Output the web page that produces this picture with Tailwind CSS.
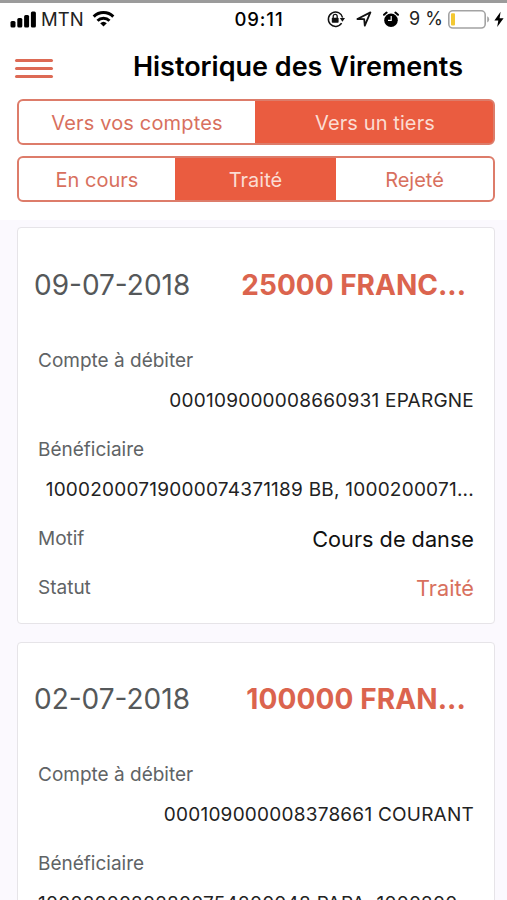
<!DOCTYPE html>
<html lang="fr">
<head>
  <meta charset="UTF-8" />
  <meta name="viewport" content="width=device-width, initial-scale=1.0" />
  <title>Historique des Virements</title>
  <script src="https://cdn.jsdelivr.net/npm/@tailwindcss/browser@4"></script>
</head>
<body class="bg-white font-['Inter','Liberation_Sans',sans-serif] h-[900px] overflow-hidden text-black">
  <div class="h-[900px] overflow-hidden flex flex-col border-t-[3px] border-[#9b9b9b]">

    <!-- Status bar -->
    <div class="h-8 shrink-0 grid grid-cols-[1fr_auto_1fr] items-center pl-[10px] pr-[3px]">
      <div class="flex items-center">
        <svg class="w-[27px] h-[17px] mr-[4px]" viewBox="0 0 27 17" fill="#000">
          <rect x="0.5" y="10" width="5" height="6.5" rx="1.5" />
          <rect x="7.3" y="7" width="5" height="9.5" rx="1.5" />
          <rect x="14.1" y="4" width="5" height="12.5" rx="1.5" />
          <rect x="20.9" y="0.5" width="5" height="16" rx="1.5" />
        </svg>
        <span class="text-[18.5px] leading-6 text-[#222]">MTN</span>
        <svg class="w-[23px] h-4 ml-[8px]" viewBox="0 0 22 16" fill="none" stroke="#000" stroke-width="3">
          <path d="M1.2 5.6a14 14 0 0 1 19.6 0" />
          <path d="M5 9.8a8.6 8.6 0 0 1 12 0" />
          <path d="M11 15.6l-3.3-3.4a4.8 4.8 0 0 1 6.6 0z" fill="#000" stroke="none" />
        </svg>
      </div>
      <span class="text-[18.5px] leading-6 font-medium tracking-[0.9px] pl-1">09:11</span>
      <div class="flex items-center justify-end">
        <svg class="w-[18px] h-[18px] mr-[11px]" viewBox="0 0 18 18" fill="none" stroke="#111" stroke-width="1.5">
          <path d="M14.6 13.2A7.2 7.2 0 1 1 15.6 7.6" />
          <path d="M12.8 8h5.2l-2.6 3.8z" fill="#111" stroke="none" />
          <rect x="4.8" y="7.8" width="6.8" height="5" rx="0.7" fill="#111" stroke="none" />
          <path d="M6.2 8V6.4a2 2 0 0 1 4 0V8" stroke-width="1.3" />
        </svg>
        <svg class="w-4 h-4 mr-[11px]" viewBox="0 0 16 16" fill="none" stroke="#111" stroke-width="1.8" stroke-linejoin="round">
          <path d="M1.4 8L14.4 1.4 8.8 14.6 8.2 8.2z" />
        </svg>
        <svg class="w-4 h-[17px] mr-[10px]" viewBox="0 0 16 17" fill="#000">
          <circle cx="8" cy="9.2" r="6.8" />
          <path d="M1 3.8L3.6 1.6M15 3.8L12.4 1.6" stroke="#000" stroke-width="2" stroke-linecap="round" />
          <path d="M8.2 5v4.4H5" fill="none" stroke="#fff" stroke-width="1.2" />
        </svg>
        <span class="text-[18px] leading-6 text-[#222] whitespace-nowrap mr-[5px]">9 %</span>
        <svg class="w-[42px] h-[19px] mr-[4px]" viewBox="0 0 42 19" fill="none">
          <rect x="0.8" y="0.8" width="36.4" height="17.2" rx="4" stroke="#a3a3a3" stroke-width="1.6" />
          <rect x="3" y="3.2" width="4" height="12.4" rx="1" fill="#f3c832" />
          <path d="M39.2 6.3q2 1 2 3.1t-2 3.1z" fill="#a3a3a3" />
        </svg>
        <svg class="w-[10px] h-[17px]" viewBox="0 0 10 17" fill="#000">
          <path d="M6.6 0.8L0.4 9.4h3.9L3.2 16 9.6 7.2H5.6z" />
        </svg>
      </div>
    </div>

    <!-- Header -->
    <header class="h-[64px] shrink-0 flex items-center pl-[15px] pr-11 justify-between">
      <button type="button" aria-label="Menu" class="flex flex-col gap-[5px] mt-[3px]">
        <span class="block w-[38px] h-[3px] rounded bg-[#dd6a55]"></span>
        <span class="block w-[38px] h-[3px] rounded bg-[#dd6a55]"></span>
        <span class="block w-[38px] h-[3px] rounded bg-[#dd6a55]"></span>
      </button>
      <h1 class="text-[27px] leading-8 font-semibold whitespace-nowrap">Historique des Virements</h1>
    </header>

    <!-- Filters -->
    <div class="shrink-0 h-[121px] pl-[17px] pr-[12px] flex flex-col gap-[11px] text-[20px] text-[#d8705e]">
      <div class="h-[46px] shrink-0 flex border-2 border-[#dd7c6a] rounded-[6px] overflow-hidden bg-[#ea5c40]">
        <button type="button" class="w-[236px] bg-white tracking-[0.15px] pt-[2px]">Vers vos comptes</button>
        <button type="button" class="flex-1 text-[#fbdcd3] tracking-[0.1px] pt-[2px] pl-[2px]">Vers un tiers</button>
      </div>
      <div class="h-[46px] shrink-0 flex border-2 border-[#dd7c6a] rounded-[6px] overflow-hidden">
        <button type="button" class="w-[156px] pt-[2px]">En cours</button>
        <button type="button" class="w-[161px] pt-[2px] bg-[#ea5c40] text-[#fbdcd3]">Traité</button>
        <button type="button" class="flex-1 pt-[2px]">Rejeté</button>
      </div>
    </div>

    <!-- Transfers -->
    <main class="flex-1 bg-[#fbf9fe] pt-[7px] pl-[17px] pr-[12px] flex flex-col gap-[18px]">
      <article class="h-[397px] shrink-0 bg-white border-[1.5px] border-[#e6e4e8] rounded-[4px] pl-[20px] pr-[20px] text-[19px] whitespace-nowrap">
        <div class="h-[113px] flex items-center justify-between -ml-1 pr-[8px]">
          <span class="text-[28px] text-[#55585a]">09-07-2018</span>
          <span class="text-[28px] font-bold text-[#db644e]">25000 FRANC...</span>
        </div>
        <div class="h-10 flex items-center text-[#606365]">Compte à débiter</div>
        <div class="h-10 flex items-center justify-end tracking-[0.23px] text-[#222]">000109000008660931 EPARGNE</div>
        <div class="h-10 mt-[9px] flex items-center text-[#606365]">Bénéficiaire</div>
        <div class="h-10 flex items-center justify-end tracking-[0.23px] text-[#222]">10002000719000074371189 BB, 1000200071...</div>
        <div class="h-[50px] mt-[4px] flex items-center justify-between">
          <span class="text-[#606365]">Motif</span>
          <span class="text-[21.7px] text-[#111]">Cours de danse</span>
        </div>
        <div class="h-[49px] flex items-center justify-between">
          <span class="text-[#606365]">Statut</span>
          <span class="text-[21.7px] text-[#d8705e]">Traité</span>
        </div>
      </article>

      <article class="h-[397px] shrink-0 bg-white border-[1.5px] border-[#e6e4e8] rounded-[4px] pl-[20px] pr-[20px] text-[19px] whitespace-nowrap">
        <div class="h-[112px] flex items-center justify-between -ml-1 pr-[8px]">
          <span class="text-[28px] text-[#55585a]">02-07-2018</span>
          <span class="text-[28px] font-bold tracking-[0.1px] text-[#db644e]">100000 FRAN...</span>
        </div>
        <div class="h-10 flex items-center text-[#606365]">Compte à débiter</div>
        <div class="h-10 flex items-center justify-end tracking-[0.23px] text-[#222]">000109000008378661 COURANT</div>
        <div class="h-10 mt-[9px] flex items-center text-[#606365]">Bénéficiaire</div>
        <div class="h-10 flex items-center justify-end tracking-[0.23px] text-[#222]">10002000202800754200048 PAPA, 1000200...</div>
      </article>
    </main>
  </div>
</body>
</html>
